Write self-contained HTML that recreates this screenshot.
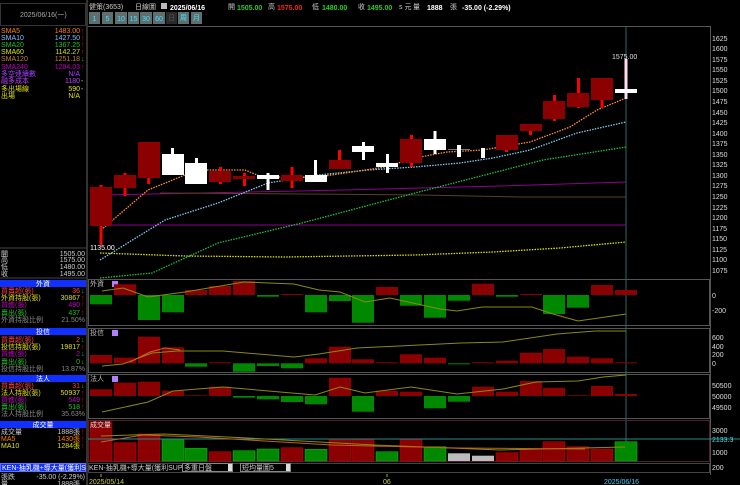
<!DOCTYPE html>
<html><head><meta charset="utf-8"><style>
html,body{margin:0;padding:0;background:#000;width:740px;height:485px;overflow:hidden}
svg{display:block}
text{font-family:"Liberation Sans","Noto Sans CJK TC",sans-serif;font-size:7px}
</style></head><body>
<svg width="740" height="485" viewBox="0 0 740 485" xmlns="http://www.w3.org/2000/svg">
<rect width="740" height="485" fill="#000"/>
<!-- left panel -->
<rect x="0.5" y="3.5" width="85" height="22" fill="#000" stroke="#333"/>
<text x="20" y="17" fill="#aaa">2025/06/16(一)</text>
<g>
<text x="1" y="33" fill="#ff8000">SMA5</text><text x="80" y="33" fill="#ff8000" text-anchor="end">1483.00</text><text x="81" y="33" fill="#f00">↑</text>
<text x="1" y="40" fill="#80c0ff">SMA10</text><text x="80" y="40" fill="#80c0ff" text-anchor="end">1427.50</text><text x="81" y="40" fill="#f00">↑</text>
<text x="1" y="47" fill="#20c020">SMA20</text><text x="80" y="47" fill="#20c020" text-anchor="end">1367.25</text><text x="81" y="47" fill="#f00">↑</text>
<text x="1" y="54" fill="#e0e000">SMA60</text><text x="80" y="54" fill="#e0e000" text-anchor="end">1142.27</text><text x="81" y="54" fill="#f00">↑</text>
<text x="1" y="61" fill="#c08040">SMA120</text><text x="80" y="61" fill="#c08040" text-anchor="end">1251.18</text><text x="81" y="61" fill="#0c0">↓</text>
<text x="1" y="69" fill="#c000c0">SMA240</text><text x="80" y="69" fill="#c000c0" text-anchor="end">1284.03</text><text x="81" y="69" fill="#f00">↑</text>
<text x="1" y="76" fill="#a040ff">多空連續數</text><text x="80" y="76" fill="#a040ff" text-anchor="end">N/A</text>
<text x="1" y="83" fill="#c040ff">融多成本</text><text x="80" y="83" fill="#c040ff" text-anchor="end">1180</text><text x="81" y="83" fill="#ccc">-</text>
<text x="1" y="91" fill="#e0e000">多出場線</text><text x="80" y="91" fill="#e0e000" text-anchor="end">590</text><text x="81" y="91" fill="#ccc">-</text>
<text x="1" y="98" fill="#e0e000">出場</text><text x="80" y="98" fill="#e0e000" text-anchor="end">N/A</text>
</g>
<line x1="0" y1="248" x2="86" y2="248" stroke="#444"/>
<text x="1" y="256" fill="#ccc">開</text><text x="85" y="256" fill="#ccc" text-anchor="end">1505.00</text>
<text x="1" y="262" fill="#ccc">高</text><text x="85" y="262" fill="#ccc" text-anchor="end">1575.00</text>
<text x="1" y="269" fill="#ccc">低</text><text x="85" y="269" fill="#ccc" text-anchor="end">1480.00</text>
<text x="1" y="276" fill="#ccc">收</text><text x="85" y="276" fill="#ccc" text-anchor="end">1495.00</text>
<line x1="0" y1="278" x2="86" y2="278" stroke="#444"/>
<!-- 外資 -->
<rect x="0" y="280" width="86" height="7" fill="#1030ff"/><text x="43" y="286" fill="#fff" text-anchor="middle">外資</text>
<text x="1" y="293" fill="#ff4040">買賣超(張)</text><text x="80" y="293" fill="#ff4040" text-anchor="end">36</text><text x="81" y="293" fill="#0c0">↓</text>
<text x="1" y="300" fill="#e0e000">外資持股(張)</text><text x="80" y="300" fill="#e0e000" text-anchor="end">30867</text><text x="81" y="300" fill="#f00">↑</text>
<text x="1" y="307" fill="#c000c0">買進(張)</text><text x="80" y="307" fill="#c000c0" text-anchor="end">490</text><text x="81" y="307" fill="#f00">↑</text>
<text x="1" y="315" fill="#20c020">賣出(張)</text><text x="80" y="315" fill="#20c020" text-anchor="end">437</text><text x="81" y="315" fill="#f00">↑</text>
<text x="1" y="322" fill="#888">外資持股比例</text><text x="85" y="322" fill="#888" text-anchor="end">21.50%</text>
<!-- 投信 -->
<rect x="0" y="328" width="86" height="7" fill="#1030ff"/><text x="43" y="334" fill="#fff" text-anchor="middle">投信</text>
<text x="1" y="342" fill="#ff4040">買賣超(張)</text><text x="80" y="342" fill="#ff4040" text-anchor="end">2</text><text x="81" y="342" fill="#0c0">↓</text>
<text x="1" y="349" fill="#e0e000">投信持股(張)</text><text x="80" y="349" fill="#e0e000" text-anchor="end">19817</text><text x="81" y="349" fill="#f00">↑</text>
<text x="1" y="356" fill="#c000c0">買進(張)</text><text x="80" y="356" fill="#c000c0" text-anchor="end">2</text><text x="81" y="356" fill="#0c0">↓</text>
<text x="1" y="364" fill="#20c020">賣出(張)</text><text x="80" y="364" fill="#20c020" text-anchor="end">0</text><text x="81" y="364" fill="#0c0">↓</text>
<text x="1" y="371" fill="#888">投信持股比例</text><text x="85" y="371" fill="#888" text-anchor="end">13.87%</text>
<!-- 法人 -->
<rect x="0" y="375" width="86" height="7" fill="#1030ff"/><text x="43" y="381" fill="#fff" text-anchor="middle">法人</text>
<text x="1" y="388" fill="#ff4040">買賣超(張)</text><text x="80" y="388" fill="#ff4040" text-anchor="end">31</text><text x="81" y="388" fill="#0c0">↓</text>
<text x="1" y="395" fill="#e0e000">法人持股(張)</text><text x="80" y="395" fill="#e0e000" text-anchor="end">50937</text><text x="81" y="395" fill="#f00">↑</text>
<text x="1" y="402" fill="#c000c0">買進(張)</text><text x="80" y="402" fill="#c000c0" text-anchor="end">549</text><text x="81" y="402" fill="#f00">↑</text>
<text x="1" y="409" fill="#20c020">賣出(張)</text><text x="80" y="409" fill="#20c020" text-anchor="end">518</text><text x="81" y="409" fill="#f00">↑</text>
<text x="1" y="416" fill="#888">法人持股比例</text><text x="85" y="416" fill="#888" text-anchor="end">35.63%</text>
<!-- 成交量 -->
<rect x="0" y="421" width="86" height="7" fill="#1030ff"/><text x="43" y="427" fill="#fff" text-anchor="middle">成交量</text>
<text x="1" y="434" fill="#ccc">成交量</text><text x="80" y="434" fill="#ccc" text-anchor="end">1888張</text><text x="81" y="434" fill="#f00">↑</text>
<text x="1" y="441" fill="#ff8000">MA5</text><text x="80" y="441" fill="#ff8000" text-anchor="end">1430張</text><text x="81" y="441" fill="#f00">↑</text>
<text x="1" y="448" fill="#e0e000">MA10</text><text x="80" y="448" fill="#e0e000" text-anchor="end">1284張</text><text x="81" y="448" fill="#f00">↑</text>
<rect x="0.5" y="463.5" width="85" height="8" fill="#1030ff" stroke="#6070ff"/><text x="2" y="470" fill="#fff" font-size="6.5">KEN-抽乳機+導大量(獲利SUP)</text>
<text x="1" y="479" fill="#ccc">張跌</text><text x="85" y="479" fill="#ccc" text-anchor="end">-35.00 (-2.29%)</text>
<text x="1" y="486" fill="#ccc">量</text><text x="80" y="486" fill="#ccc" text-anchor="end">1888張</text>
<line x1="87" y1="0" x2="87" y2="485" stroke="#333" stroke-width="2"/>

<!-- header -->
<text x="89" y="9" fill="#ccc">健策(3653)</text>
<text x="135" y="9" fill="#ccc">日線圖</text>
<rect x="161" y="3" width="6" height="6" fill="#bbb"/>
<text x="170" y="10" fill="#fff" font-size="9" font-weight="bold">2025/06/16</text>
<text x="228" y="9" fill="#ccc">開</text><text x="237" y="10" fill="#20d020" font-size="8" font-weight="bold">1505.00</text>
<text x="268" y="9" fill="#ccc">高</text><text x="277" y="10" fill="#ff2020" font-size="8" font-weight="bold">1575.00</text>
<text x="312" y="9" fill="#ccc">低</text><text x="322" y="10" fill="#20d020" font-size="8" font-weight="bold">1480.00</text>
<text x="358" y="9" fill="#ccc">收</text><text x="367" y="10" fill="#20d020" font-size="8" font-weight="bold">1495.00</text>
<text x="399" y="9" fill="#ccc">s 元</text><text x="413" y="9" fill="#ccc">量</text>
<text x="427" y="10" fill="#fff" font-size="8" font-weight="bold">1888</text><text x="450" y="9" fill="#ccc">張</text>
<text x="462" y="10" fill="#fff" font-size="8" font-weight="bold">-35.00 (-2.29%)</text>
<!-- buttons -->
<g font-size="8">
<rect x="89" y="12" width="11" height="12" fill="#5f6f6f"/><text x="94.5" y="21" fill="#40e0ff" text-anchor="middle" font-size="8">1</text>
<rect x="102" y="12" width="11" height="12" fill="#5f6f6f"/><text x="107.5" y="21" fill="#40e0ff" text-anchor="middle" font-size="8">5</text>
<rect x="115" y="12" width="12" height="12" fill="#5f6f6f"/><text x="121" y="21" fill="#40e0ff" text-anchor="middle" font-size="8">10</text>
<rect x="128" y="12" width="11" height="12" fill="#5f6f6f"/><text x="133.5" y="21" fill="#40e0ff" text-anchor="middle" font-size="8">15</text>
<rect x="140" y="12" width="12" height="12" fill="#5f6f6f"/><text x="146" y="21" fill="#40e0ff" text-anchor="middle" font-size="8">30</text>
<rect x="153" y="12" width="12" height="12" fill="#5f6f6f"/><text x="159" y="21" fill="#40e0ff" text-anchor="middle" font-size="8">60</text>
<rect x="166" y="12" width="11" height="12" fill="#2a2a2a"/><text x="171.5" y="20" fill="#555" text-anchor="middle">日</text>
<rect x="178" y="12" width="11" height="12" fill="#5f6f6f"/><text x="183.5" y="20" fill="#40e0ff" text-anchor="middle">周</text>
<rect x="191" y="12" width="11" height="12" fill="#5f6f6f"/><text x="196.5" y="20" fill="#40e0ff" text-anchor="middle">月</text>
</g>
<!-- main chart frame -->
<line x1="88" y1="26.5" x2="710" y2="26.5" stroke="#555"/>
<line x1="710.5" y1="26" x2="710.5" y2="475" stroke="#555"/>
<line x1="626" y1="27" x2="626" y2="472" stroke="#2a6a6a"/>
<!-- price axis -->
<g fill="#ddd">
<text x="712" y="41">1625</text><text x="712" y="51">1600</text><text x="712" y="62">1575</text><text x="712" y="72">1550</text><text x="712" y="83">1525</text><text x="712" y="93">1500</text><text x="712" y="104">1475</text><text x="712" y="115">1450</text><text x="712" y="125">1425</text><text x="712" y="136">1400</text><text x="712" y="146">1375</text><text x="712" y="157">1350</text><text x="712" y="167">1325</text><text x="712" y="178">1300</text><text x="712" y="188">1275</text><text x="712" y="199">1250</text><text x="712" y="210">1225</text><text x="712" y="220">1200</text><text x="712" y="231">1175</text><text x="712" y="241">1150</text><text x="712" y="252">1125</text><text x="712" y="262">1100</text><text x="712" y="273">1075</text>
</g>
<!-- flat lines -->
<line x1="100" y1="225" x2="626" y2="225" stroke="#900090" stroke-width="1"/>
<polyline points="100,195 300,191 500,186 626,182" fill="none" stroke="#900090"/>
<polyline points="160,193 300,194 420,195 520,197 626,197" fill="none" stroke="#5a4020"/>
<!-- MA lines -->
<g fill="none" stroke-width="1.3" stroke-dasharray="1.5 1.2">
<polyline stroke="#e0e000" points="100,253 185,256 285,257 415,255 493,252 560,248 626,242"/>
<polyline stroke="#20c040" points="100,278 152,273 218,243 302,223 415,193 477,177 543,160 626,147"/>
<polyline stroke="#80c8f0" points="100,260 165,220 218,203 268,183 318,175 368,170 415,167 460,163 493,158 530,150 577,133 626,122"/>
<polyline stroke="#ff9030" points="101,230 148,190 185,175 208,170 245,170 262,177 318,177 352,172 385,167 415,158 447,152 483,150 530,142 570,127 597,110 626,98"/>
</g>
<!-- candles -->
<g>
<rect x="99.5" y="185" width="3" height="60" fill="#f00"/><rect x="90" y="187" width="22" height="39" fill="#8b0000"/>
<rect x="123.5" y="173" width="3" height="23" fill="#f00"/><rect x="114" y="175" width="22" height="13" fill="#8b0000"/>
<rect x="147.2" y="142" width="3" height="42" fill="#f00"/><rect x="138" y="142" width="22" height="36" fill="#8b0000"/>
<rect x="171" y="148" width="3" height="27" fill="#fff"/><rect x="162" y="154" width="22" height="21" fill="#fff"/>
<rect x="195" y="158" width="3" height="26" fill="#fff"/><rect x="185" y="163" width="22" height="21" fill="#fff"/>
<rect x="219" y="167" width="3" height="17" fill="#f00"/><rect x="209" y="171" width="22" height="11" fill="#8b0000"/>
<rect x="243" y="173" width="3" height="13" fill="#f00"/><rect x="233" y="176" width="22" height="3" fill="#8b0000"/>
<rect x="266.5" y="173" width="3" height="17" fill="#fff"/><rect x="257" y="175" width="22" height="4" fill="#fff"/>
<rect x="290.5" y="167" width="3" height="21" fill="#f00"/><rect x="281" y="175" width="22" height="6" fill="#8b0000"/>
<rect x="314" y="160" width="3" height="22" fill="#fff"/><rect x="305" y="175" width="22" height="7" fill="#fff"/>
<rect x="338" y="150" width="3" height="19" fill="#f00"/><rect x="329" y="160" width="22" height="9" fill="#8b0000"/>
<rect x="362" y="142" width="3" height="18" fill="#fff"/><rect x="352" y="146" width="22" height="6" fill="#fff"/>
<rect x="386" y="154" width="3" height="19" fill="#fff"/><rect x="376" y="163" width="22" height="4" fill="#fff"/>
<rect x="410" y="135" width="3" height="32" fill="#f00"/><rect x="400" y="139" width="22" height="24" fill="#8b0000"/>
<rect x="433.5" y="131" width="3" height="23" fill="#fff"/><rect x="424" y="139" width="22" height="11" fill="#fff"/>
<line x1="448" y1="149.5" x2="470" y2="149.5" stroke="#777"/>
<rect x="457" y="145" width="4" height="12" fill="#fff"/>
<rect x="481" y="148" width="4" height="10" fill="#fff"/>
<rect x="505" y="135" width="3" height="17" fill="#f00"/><rect x="496" y="135" width="22" height="15" fill="#8b0000"/>
<rect x="529" y="124" width="3" height="11" fill="#f00"/><rect x="520" y="124" width="22" height="7" fill="#8b0000"/>
<rect x="553" y="95" width="3" height="26" fill="#f00"/><rect x="543" y="101" width="22" height="18" fill="#8b0000"/>
<rect x="577" y="78" width="3" height="30" fill="#f00"/><rect x="567" y="93" width="22" height="14" fill="#8b0000"/>
<rect x="600.5" y="78" width="3" height="30" fill="#f00"/><rect x="591" y="78" width="22" height="22" fill="#8b0000"/>
<rect x="624.5" y="59" width="3" height="40" fill="#fde"/><rect x="615" y="89" width="22" height="4" fill="#fff"/>
</g>
<text x="612" y="59" fill="#ddd">1575.00</text>
<text x="90" y="250" fill="#fff">1135.00</text>

<!-- 外資 panel -->
<rect x="88.5" y="279.5" width="621" height="46" fill="none" stroke="#555"/>
<text x="90" y="286" fill="#bbb" font-size="6">外資</text><rect x="112" y="281" width="6" height="6" fill="#b080ff"/>
<g>
<rect x="90" y="295" width="22" height="9.3" fill="#080"/>
<rect x="114" y="284.3" width="22" height="10.7" fill="#8b0000"/>
<rect x="138" y="295" width="22" height="25" fill="#080"/>
<rect x="162" y="295" width="22" height="17.3" fill="#080"/>
<rect x="185" y="290" width="22" height="5" fill="#8b0000"/>
<rect x="209" y="286" width="22" height="9" fill="#8b0000"/>
<rect x="233" y="281" width="22" height="14" fill="#8b0000"/>
<rect x="257" y="295" width="22" height="1.7" fill="#080"/>
<rect x="281" y="294" width="22" height="1" fill="#8b0000"/>
<rect x="305" y="295" width="22" height="17.3" fill="#080"/>
<rect x="329" y="295" width="22" height="6" fill="#080"/>
<rect x="352" y="295" width="22" height="27.7" fill="#080"/>
<rect x="376" y="287" width="22" height="8" fill="#8b0000"/>
<rect x="400" y="295" width="22" height="10.7" fill="#080"/>
<rect x="424" y="295" width="22" height="22.7" fill="#080"/>
<rect x="448" y="295" width="22" height="5.7" fill="#080"/>
<rect x="472" y="283.7" width="22" height="11.3" fill="#8b0000"/>
<rect x="496" y="295" width="22" height="1.7" fill="#080"/>
<rect x="520" y="294" width="22" height="1" fill="#8b0000"/>
<rect x="543" y="295" width="22" height="19" fill="#080"/>
<rect x="567" y="295" width="22" height="12.7" fill="#080"/>
<rect x="591" y="285" width="22" height="10" fill="#8b0000"/>
<rect x="615" y="290" width="22" height="5" fill="#8b0000"/>
</g>
<polyline fill="none" stroke="#8a8a10" points="102,291 123,288 148,297 185,292 244,282 294,284 319,290 340,292 365,302 390,298 440,309 457,311 482,307 532,307 553,314 578,321 626,314"/>
<text x="712" y="298" fill="#ddd">0</text><text x="712" y="313" fill="#ddd">-200</text>

<!-- 投信 -->
<rect x="88.5" y="328.5" width="621" height="44" fill="none" stroke="#555"/>
<text x="90" y="335" fill="#bbb" font-size="6">投信</text><rect x="112" y="330" width="6" height="6" fill="#b080ff"/>
<g>
<rect x="90" y="355" width="22" height="8.3" fill="#8b0000"/>
<rect x="114" y="357.7" width="22" height="5.6" fill="#8b0000"/>
<rect x="138" y="336.7" width="22" height="26.6" fill="#8b0000"/>
<rect x="162" y="347.3" width="22" height="16" fill="#8b0000"/>
<rect x="185" y="363.3" width="22" height="3.4" fill="#080"/>
<rect x="209" y="362.3" width="22" height="1" fill="#8b0000"/>
<rect x="233" y="363.3" width="22" height="8.4" fill="#080"/>
<rect x="257" y="363.3" width="22" height="2.7" fill="#080"/>
<rect x="281" y="363.3" width="22" height="5" fill="#080"/>
<rect x="305" y="358.3" width="22" height="5" fill="#8b0000"/>
<rect x="329" y="346.7" width="22" height="16.6" fill="#8b0000"/>
<rect x="352" y="359.3" width="22" height="4" fill="#8b0000"/>
<rect x="376" y="362.3" width="22" height="1" fill="#8b0000"/>
<rect x="400" y="354.3" width="22" height="9" fill="#8b0000"/>
<rect x="424" y="357.7" width="22" height="5.6" fill="#8b0000"/>
<rect x="448" y="363.3" width="22" height="1" fill="#080"/>
<rect x="472" y="362.3" width="22" height="1" fill="#8b0000"/>
<rect x="496" y="360.7" width="22" height="2.6" fill="#8b0000"/>
<rect x="520" y="352.7" width="22" height="10.6" fill="#8b0000"/>
<rect x="543" y="349" width="22" height="14.3" fill="#8b0000"/>
<rect x="567" y="356.7" width="22" height="6.6" fill="#8b0000"/>
<rect x="591" y="358.3" width="22" height="5" fill="#8b0000"/>
<rect x="615" y="362.3" width="22" height="1" fill="#8b0000"/>
</g>
<polyline fill="none" stroke="#8a8a10" points="102,366 123,364 152,353 177,351 223,351 294,357 319,354 357,348 461,343 503,342 557,334 595,331 626,331"/>
<polyline fill="none" stroke="#d06020" points="130,362 150,352 165,348 180,350"/>
<text x="712" y="340" fill="#ddd">600</text><text x="712" y="349" fill="#ddd">400</text><text x="712" y="357" fill="#ddd">200</text><text x="712" y="366" fill="#ddd">0</text>

<!-- 法人 -->
<rect x="88.5" y="374.5" width="621" height="44" fill="none" stroke="#555"/>
<text x="90" y="381" fill="#bbb" font-size="6">法人</text><rect x="112" y="376" width="6" height="6" fill="#b080ff"/>
<g>
<rect x="90" y="389.3" width="22" height="6.7" fill="#8b0000"/>
<rect x="114" y="382.7" width="22" height="13.3" fill="#8b0000"/>
<rect x="138" y="381.7" width="22" height="14.3" fill="#8b0000"/>
<rect x="162" y="390.7" width="22" height="5.3" fill="#8b0000"/>
<rect x="185" y="395.3" width="22" height="0.7" fill="#8b0000"/>
<rect x="209" y="386.7" width="22" height="9.3" fill="#8b0000"/>
<rect x="233" y="396" width="22" height="1.7" fill="#080"/>
<rect x="257" y="396" width="22" height="3.3" fill="#080"/>
<rect x="281" y="396" width="22" height="6" fill="#080"/>
<rect x="305" y="396" width="22" height="8.3" fill="#080"/>
<rect x="329" y="377.7" width="22" height="18.3" fill="#8b0000"/>
<rect x="352" y="396" width="22" height="15.7" fill="#080"/>
<rect x="376" y="390.7" width="22" height="5.3" fill="#8b0000"/>
<rect x="400" y="391.7" width="22" height="4.3" fill="#8b0000"/>
<rect x="424" y="396" width="22" height="12.3" fill="#080"/>
<rect x="448" y="396" width="22" height="5.7" fill="#080"/>
<rect x="472" y="386.7" width="22" height="9.3" fill="#8b0000"/>
<rect x="496" y="391.7" width="22" height="4.3" fill="#8b0000"/>
<rect x="520" y="381" width="22" height="15" fill="#8b0000"/>
<rect x="543" y="387.7" width="22" height="8.3" fill="#8b0000"/>
<rect x="567" y="395.3" width="22" height="0.7" fill="#8b0000"/>
<rect x="591" y="386" width="22" height="10" fill="#8b0000"/>
<rect x="615" y="394" width="22" height="2" fill="#8b0000"/>
</g>
<polyline fill="none" stroke="#8a8a10" points="102,412 148,402 173,391 223,387 315,395 340,387 365,393 411,387 457,394 503,389 536,382 578,381 603,377 626,375"/>
<text x="712" y="388" fill="#ddd">50500</text><text x="712" y="399" fill="#ddd">50000</text><text x="712" y="410" fill="#ddd">49500</text>

<!-- volume -->
<rect x="88.5" y="420.5" width="621" height="41" fill="none" stroke="#502030"/>
<g>
<rect x="90" y="421.7" width="22" height="39.3" fill="#8b0000" stroke="#c00" stroke-width="0.5"/>
<rect x="114" y="442.7" width="22" height="18.3" fill="#8b0000" stroke="#c00" stroke-width="0.5"/>
<rect x="138" y="434" width="22" height="27" fill="#8b0000" stroke="#c00" stroke-width="0.5"/>
<rect x="162" y="439" width="22" height="22" fill="#080" stroke="#0c0" stroke-width="0.5"/>
<rect x="185" y="448.3" width="22" height="12.7" fill="#080" stroke="#0c0" stroke-width="0.5"/>
<rect x="209" y="451.7" width="22" height="9.3" fill="#8b0000" stroke="#c00" stroke-width="0.5"/>
<rect x="233" y="450.7" width="22" height="10.3" fill="#080" stroke="#0c0" stroke-width="0.5"/>
<rect x="257" y="449" width="22" height="12" fill="#080" stroke="#0c0" stroke-width="0.5"/>
<rect x="281" y="447.7" width="22" height="13.3" fill="#8b0000" stroke="#c00" stroke-width="0.5"/>
<rect x="305" y="449.3" width="22" height="11.7" fill="#080" stroke="#0c0" stroke-width="0.5"/>
<rect x="329" y="440" width="22" height="21" fill="#8b0000" stroke="#c00" stroke-width="0.5"/>
<rect x="352" y="439.3" width="22" height="21.7" fill="#8b0000" stroke="#c00" stroke-width="0.5"/>
<rect x="376" y="451.7" width="22" height="9.3" fill="#080" stroke="#0c0" stroke-width="0.5"/>
<rect x="400" y="439.3" width="22" height="21.7" fill="#8b0000" stroke="#c00" stroke-width="0.5"/>
<rect x="424" y="446.7" width="22" height="14.3" fill="#080" stroke="#0c0" stroke-width="0.5"/>
<rect x="448" y="453.3" width="22" height="7.7" fill="#bbb"/>
<rect x="472" y="455.7" width="22" height="5.3" fill="#bbb"/>
<rect x="496" y="452.7" width="22" height="8.3" fill="#8b0000" stroke="#c00" stroke-width="0.5"/>
<rect x="520" y="449.3" width="22" height="11.7" fill="#8b0000" stroke="#c00" stroke-width="0.5"/>
<rect x="543" y="441.7" width="22" height="19.3" fill="#8b0000" stroke="#c00" stroke-width="0.5"/>
<rect x="567" y="446.7" width="22" height="14.3" fill="#8b0000" stroke="#c00" stroke-width="0.5"/>
<rect x="591" y="449" width="22" height="12" fill="#8b0000" stroke="#c00" stroke-width="0.5"/>
<rect x="615" y="441.7" width="22" height="19.3" fill="#080" stroke="#0c0" stroke-width="0.5"/>
</g>
<text x="90" y="427" fill="#ddd" font-size="6">成交量</text>
<line x1="88" y1="439" x2="740" y2="439" stroke="#2a8a8a"/>
<polyline fill="none" stroke="#8a8a10" points="101,436 164,434 248,438 374,445 500,450 625,447"/>
<polyline fill="none" stroke="#c06020" points="101,442 143,435 198,437 332,445 458,448 585,449"/>
<text x="712" y="433" fill="#ddd">3000</text><text x="712" y="442" fill="#40e0e0">2133.3</text><text x="712" y="455" fill="#ddd">1000</text><text x="712" y="470" fill="#ddd">200</text>

<!-- dropdown row -->
<rect x="88" y="462" width="622" height="11" fill="#000"/>
<rect x="88.5" y="463.5" width="621" height="9" fill="none" stroke="#444"/>
<text x="89" y="470" fill="#ccc" font-size="6">KEN-抽乳機+導大量(獲利SUP)</text>
<rect x="182.5" y="463.5" width="50" height="8" fill="#000" stroke="#888"/><text x="184" y="470" fill="#ccc" font-size="6">多重日盤</text><rect x="228" y="464" width="4" height="7" fill="#ddd"/>
<rect x="240.5" y="463.5" width="50" height="8" fill="#000" stroke="#888"/><text x="242" y="470" fill="#ccc" font-size="6">短均量圖5</text><rect x="286" y="464" width="4" height="7" fill="#ddd"/>
<!-- date axis -->
<line x1="101" y1="474" x2="101" y2="477" stroke="#aa0"/>
<line x1="387" y1="474" x2="387" y2="477" stroke="#aa0"/>
<text x="89" y="484" fill="#d0d020" font-size="7.5">2025/05/14</text>
<text x="383" y="484" fill="#d0d020" font-size="7.5">06</text>
<text x="604" y="484" fill="#40d0ff" font-size="7.5">2025/06/16</text>
</svg>
</body></html>
